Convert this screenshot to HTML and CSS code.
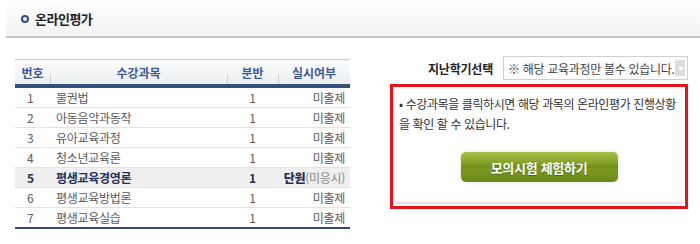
FILE: index.html
```html
<!DOCTYPE html>
<html lang="ko">
  <head>
    <meta charset="UTF-8" />
    <title>온라인평가</title>
    <link rel="stylesheet" href="styles.css">
  </head>
  <body>
    <div class="eval-page">
      <div class="eval-head">
        <span class="eval-bullet"></span>
        <span class="eval-title">온라인평가</span>
      </div>
      <div class="eval-body">
        <table class="eval-table">
          <thead>
            <tr>
              <th class="col-no">번호</th>
              <th class="col-name">수강과목</th>
              <th class="col-cls">분반</th>
              <th class="col-state">실시여부</th>
            </tr>
          </thead>
          <tbody>
            <tr><td class="col-no">1</td><td class="col-name">물권법</td><td class="col-cls">1</td><td class="col-state">미출제</td></tr>
            <tr><td class="col-no">2</td><td class="col-name">아동음악과동작</td><td class="col-cls">1</td><td class="col-state">미출제</td></tr>
            <tr><td class="col-no">3</td><td class="col-name">유아교육과정</td><td class="col-cls">1</td><td class="col-state">미출제</td></tr>
            <tr><td class="col-no">4</td><td class="col-name">청소년교육론</td><td class="col-cls">1</td><td class="col-state">미출제</td></tr>
            <tr class="on"><td class="col-no">5</td><td class="col-name">평생교육경영론</td><td class="col-cls">1</td><td class="col-state"><b>단원</b><span class="sub">(미응시)</span></td></tr>
            <tr><td class="col-no">6</td><td class="col-name">평생교육방법론</td><td class="col-cls">1</td><td class="col-state">미출제</td></tr>
            <tr><td class="col-no">7</td><td class="col-name">평생교육실습</td><td class="col-cls">1</td><td class="col-state">미출제</td></tr>
          </tbody>
        </table>
        <div class="eval-side">
          <div class="term-row">
            <span class="term-label">지난학기선택</span>
            <div class="term-select">
              <span class="term-text">※ 해당 교육과정만 볼수 있습니다.</span>
              <span class="term-arrow"></span>
            </div>
          </div>
          <div class="info-box">
            <div class="info-inner">
              <p class="info-text">• 수강과목을 클릭하시면 해당 과목의 온라인평가 진행상황을 확인 할 수 있습니다.</p>
              <button class="mock-btn">모의시험 체험하기</button>
            </div>
          </div>
        </div>
      </div>
    </div>
  </body>
</html>
```

FILE: styles.css
```css
body {
  margin: 0;
  background: #fff;
  font-family: "Noto Sans CJK KR", "Noto Sans", sans-serif;
  font-size: 12px;
  color: #5a5a5a;
}
.eval-page {
  width: 700px;
}
.eval-head {
  margin-left: 6px;
  height: 36px;
  display: flex;
  align-items: center;
  padding-left: 15px;
  background: linear-gradient(#fff, #f3f3f3);
  border-bottom: 2px solid #c4c4c4;
}
.eval-bullet {
  width: 4px;
  height: 4px;
  border: 2px solid #2d4a86;
  border-radius: 50%;
  margin-right: 6px;
  margin-top: 1px;
}
.eval-title {
  font-size: 13px;
  font-weight: bold;
  color: #222;
  letter-spacing: -0.5px;
}
.eval-body {
  display: flex;
  align-items: flex-start;
  padding-left: 15px;
}
.eval-table {
  margin-top: 21px;
  width: 335px;
  border-collapse: collapse;
  border-bottom: 2px solid #2f4a7a;
}
.eval-table th {
  height: 24px;
  padding: 0;
  border-top: 1px solid #c9d0dc;
  border-bottom: 4px solid #34507f;
  background: linear-gradient(#fbfbfb, #eceef1);
  color: #3b5a98;
  font-size: 12px;
  font-weight: bold;
  text-align: center;
}
.eval-table th + th {
  background:
    linear-gradient(#cfcfcf, #cfcfcf) no-repeat left 14px / 1px 10px,
    linear-gradient(#fbfbfb, #eceef1);
}
.eval-table td {
  height: 19px;
  padding: 0;
  border-bottom: 1px solid #e2e2e2;
  font-size: 12px;
  letter-spacing: -0.3px;
}
.eval-table tr:last-child td {
  border-bottom: none;
}
.col-no {
  width: 35px;
}
td.col-no {
  padding-left: 12px !important;
  width: 23px;
}
td.col-name {
  padding-left: 6px !important;
}
.col-cls {
  width: 51px;
  text-align: center;
}
.col-state {
  width: 67px;
}
td.col-state {
  text-align: right;
  padding-right: 5px !important;
  white-space: nowrap;
}
.eval-table tr.on td {
  background: #efefef;
  color: #1f2f5c;
  font-weight: bold;
}
.eval-table tr.on .sub {
  color: #888;
  font-weight: normal;
}
.eval-side {
  margin-left: 40px;
  width: 300px;
}
.term-row {
  margin-top: 18px;
  display: flex;
  align-items: center;
  justify-content: flex-end;
  gap: 10px;
  padding-right: 2px;
}
.term-label {
  font-weight: bold;
  color: #222;
  font-size: 12px;
  letter-spacing: -0.2px;
}
.term-select {
  width: 185px;
  border: 1px solid #cfcfcf;
  display: flex;
  align-items: center;
  justify-content: space-between;
  padding: 0 2px 0 4px;
  box-sizing: border-box;
  height: 24px;
}
.term-text {
  color: #444;
  font-size: 12px;
  letter-spacing: -0.3px;
  white-space: nowrap;
}
.term-arrow {
  width: 13px;
  height: 16px;
  background: #ddd;
  position: relative;
}
.term-arrow::after {
  content: "";
  position: absolute;
  left: 3px;
  top: 7px;
  border-left: 3.5px solid transparent;
  border-right: 3.5px solid transparent;
  border-top: 4px solid #fff;
}
.info-box {
  margin-top: 4px;
  width: 298px;
  height: 125px;
  border: 3px solid #e8141a;
  box-sizing: border-box;
  padding: 2px;
}
.info-inner {
  height: 100%;
  box-sizing: border-box;
  border-bottom: 2px solid #e3e3e3;
  padding: 5px 4px 0 4px;
  text-align: center;
}
.info-text {
  margin: 0;
  text-align: left;
  line-height: 20px;
  color: #333;
  font-size: 12px;
  letter-spacing: -0.4px;
}
.mock-btn {
  margin-top: 18px;
  width: 157px;
  height: 30px;
  border: none;
  border-radius: 5px;
  background: linear-gradient(#a7c246 0%, #8aa82c 30%, #6f8d18 52%, #7a9a22 56%, #6a8818 100%);
  box-shadow: 0 0 4px rgba(0, 0, 0, 0.15);
  color: #fff;
  font-family: inherit;
  font-size: 13px;
  font-weight: bold;
  letter-spacing: -0.3px;
  text-shadow: 0 1px 1px rgba(0, 0, 0, 0.3);
}
```
